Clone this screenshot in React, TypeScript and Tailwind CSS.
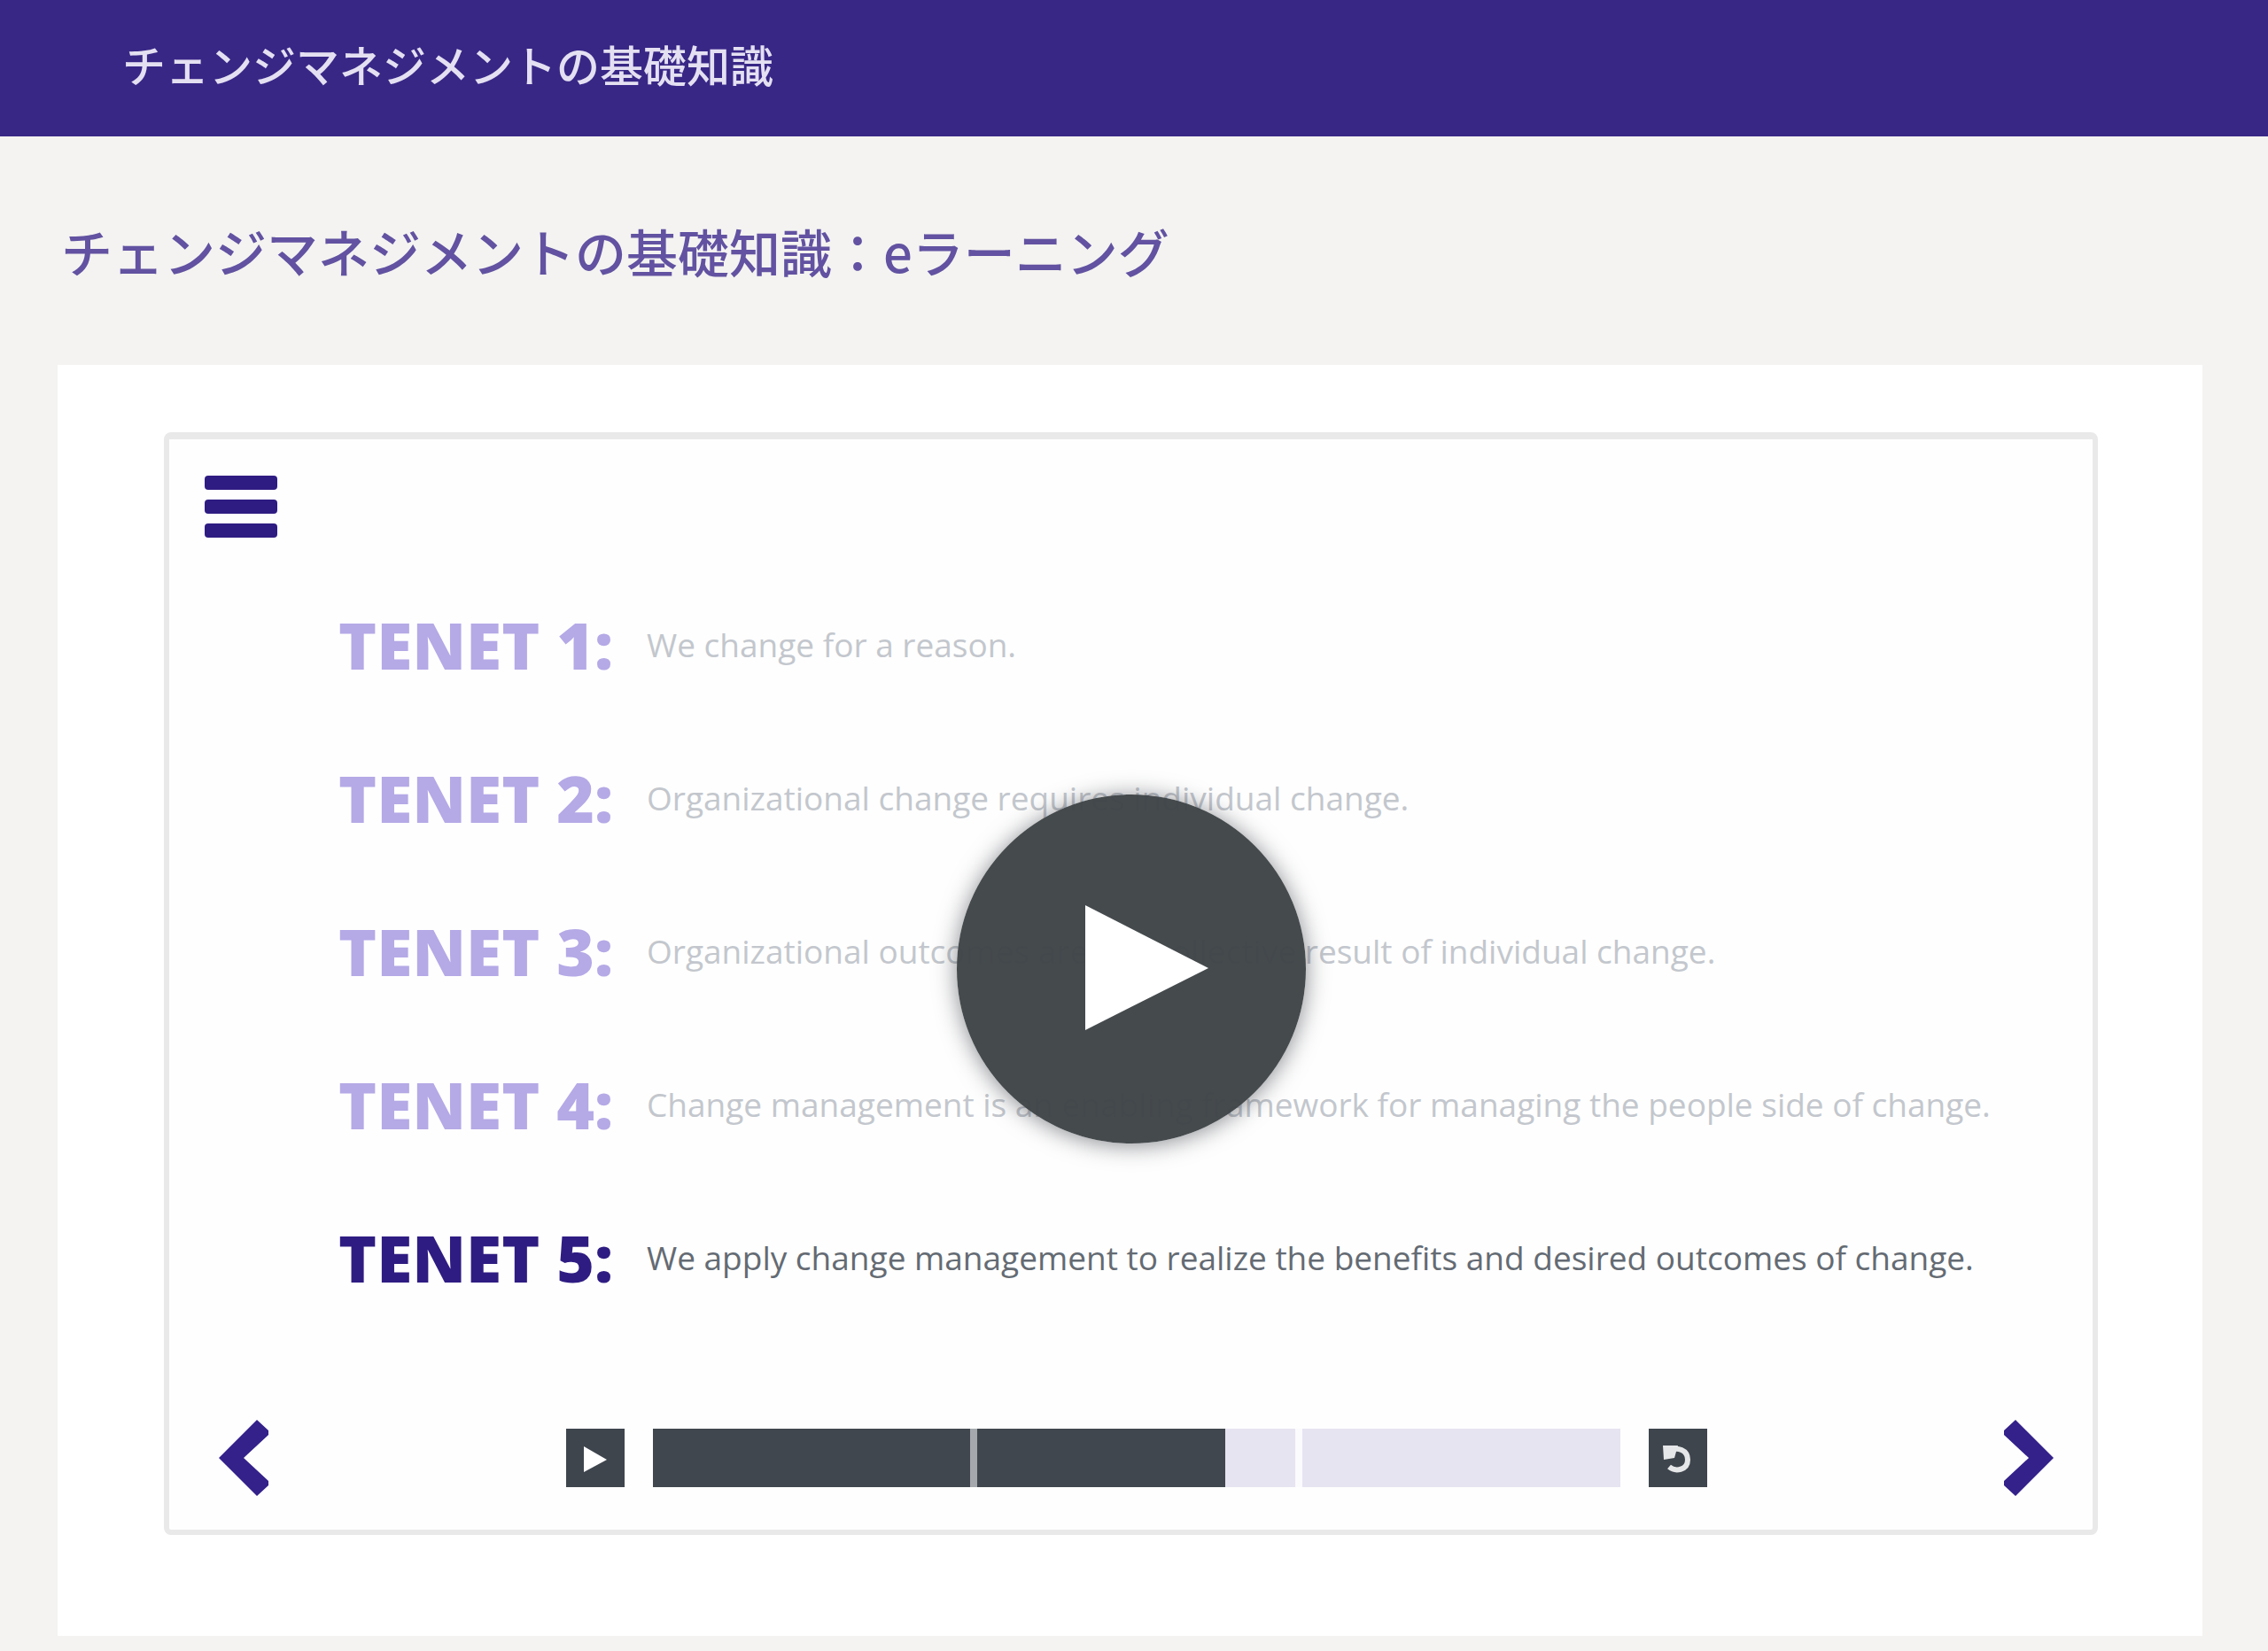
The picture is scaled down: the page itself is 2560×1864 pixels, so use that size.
import { Fragment } from 'react';
import { clsx } from 'clsx';

interface Tenet {
	id: number;
	text: string;
}

const tenets: Tenet[] = [
	{ id: 1, text: 'We change for a reason.' },
	{ id: 2, text: 'Organizational change requires individual change.' },
	{
		id: 3,
		text: 'Organizational outcomes are the collective result of individual change.',
	},
	{
		id: 4,
		text: 'Change management is an enabling framework for managing the people side of change.',
	},
	{
		id: 5,
		text: 'We apply change management to realize the benefits and desired outcomes of change.',
	},
];

const ACTIVE_TENET = 5;

// share of each chapter that has been played, in percent
const chapters = [100, 78, 0];

export default function App() {
	return (
		<div className="flex min-h-screen flex-col bg-[#f4f3f1] font-['Open_Sans','Noto_Sans_CJK_JP',sans-serif]">
			<header className="flex h-[154px] items-center bg-[#392786] px-[138px] pb-1.5">
				<span className="text-[49px] leading-[60px] font-medium text-[#e4e0f2]">
					チェンジマネジメントの基礎知識
				</span>
			</header>

			<main className="flex flex-col pr-[74px] pb-4 pl-[65px]">
				<h1 className="px-1 py-[94px] font-['Noto_Sans_CJK_JP',sans-serif] text-[58px] leading-[70px] font-medium text-[#6252a1]">
					チェンジマネジメントの基礎知識：eラーニング
				</h1>
				<section className="bg-white pt-[76px] pr-[118px] pb-[114px] pl-[120px]">
					<CoursePlayer />
				</section>
			</main>
		</div>
	);
}

const CoursePlayer = () => {
	return (
		<div className="relative flex flex-col rounded-lg border-6 border-t-8 border-[#e9e9e9] bg-[#fefefe] px-10 pt-[41px] pb-[38px]">
			<button aria-label="Menu" className="flex w-[82px] flex-col gap-[11px]">
				<span className="h-4 w-full rounded-sm bg-[#2f1c82]" />
				<span className="h-4 w-full rounded-sm bg-[#2f1c82]" />
				<span className="h-4 w-full rounded-sm bg-[#2f1c82]" />
			</button>

			<ul className="flex flex-col gap-[73px] pt-[71px] pb-[133px] pl-[151px]">
				{tenets.map((tenet) => (
					<TenetRow
						key={tenet.id}
						tenet={tenet}
						isActive={tenet.id === ACTIVE_TENET}
					/>
				))}
			</ul>

			<PlayerControls />

			<div className="pointer-events-none absolute inset-0 flex items-center justify-center pb-9">
				<button
					aria-label="Play video"
					className="pointer-events-auto flex size-[394px] items-center justify-center rounded-full bg-[#3f4447]/97 shadow-[0_2px_26px_rgba(40,44,52,0.55)]"
				>
					<svg viewBox="0 0 394 394" className="size-full" fill="#fff">
						<path d="M145 125 284 196 145 266Z" />
					</svg>
				</button>
			</div>
		</div>
	);
};

interface TenetRowProps {
	tenet: Tenet;
	isActive: boolean;
}

const TenetRow = (props: TenetRowProps) => {
	const { tenet, isActive } = props;

	return (
		<li className="flex items-center leading-[100px]">
			<span
				className={clsx(
					'w-[348px] shrink-0 text-[73px] font-extrabold whitespace-nowrap',
					isActive ? 'text-[#2f1c82]' : 'text-[#b5a9e6]'
				)}
			>
				TENET {tenet.id}:
			</span>
			<span
				className={clsx(
					'text-[37px] whitespace-nowrap',
					isActive ? 'text-[#646b73]' : 'text-[#c3c7cd]'
				)}
			>
				{tenet.text}
			</span>
		</li>
	);
};

const PlayerControls = () => {
	return (
		<div className="flex items-center justify-between pr-1 pl-4">
			<button aria-label="Previous">
				<svg viewBox="0 0 56 86" className="h-[86px] w-14" fill="#34218a">
					<path d="M43 0 56 12V17L28 43 56 69V74L43 86 0 43Z" />
				</svg>
			</button>

			<div className="flex w-[1288px] items-center gap-8">
				<button
					aria-label="Play"
					className="flex size-[66px] items-center justify-center bg-[#3e454d]"
				>
					<svg viewBox="0 0 66 66" className="size-full" fill="#fff">
						<path d="M20 20 46 35 20 49Z" />
					</svg>
				</button>
				<div className="flex flex-1">
					{chapters.map((played, index) => (
						<Fragment key={index}>
							{index > 0 && (
								<div
									className={clsx(
										'w-2',
										chapters[index - 1] === 100
											? 'bg-[#a5a9ad]'
											: 'bg-[#fbfafd]'
									)}
								/>
							)}
							<div className="h-[66px] flex-1 bg-[#e7e4f1]">
								<div
									className="h-full bg-[#41474e]"
									style={{ width: `${played}%` }}
								/>
							</div>
						</Fragment>
					))}
				</div>
				<button
					aria-label="Replay"
					className="flex size-[66px] items-center justify-center bg-[#3e454d]"
				>
					<svg
						viewBox="0 0 66 66"
						className="size-full"
						fill="none"
						stroke="#e6e7e8"
						strokeWidth="6"
					>
						<path d="M24 25C32 20 44 24 44 35C44 47 30 49 23 43" />
						<path d="M16 19H33L29 33 17 35Z" fill="#e6e7e8" stroke="none" />
					</svg>
				</button>
			</div>

			<button aria-label="Next">
				<svg viewBox="0 0 56 86" className="h-[86px] w-14" fill="#34218a">
					<path d="M13 0 0 12V17L28 43 0 69V74L13 86 56 43Z" />
				</svg>
			</button>
		</div>
	);
};
